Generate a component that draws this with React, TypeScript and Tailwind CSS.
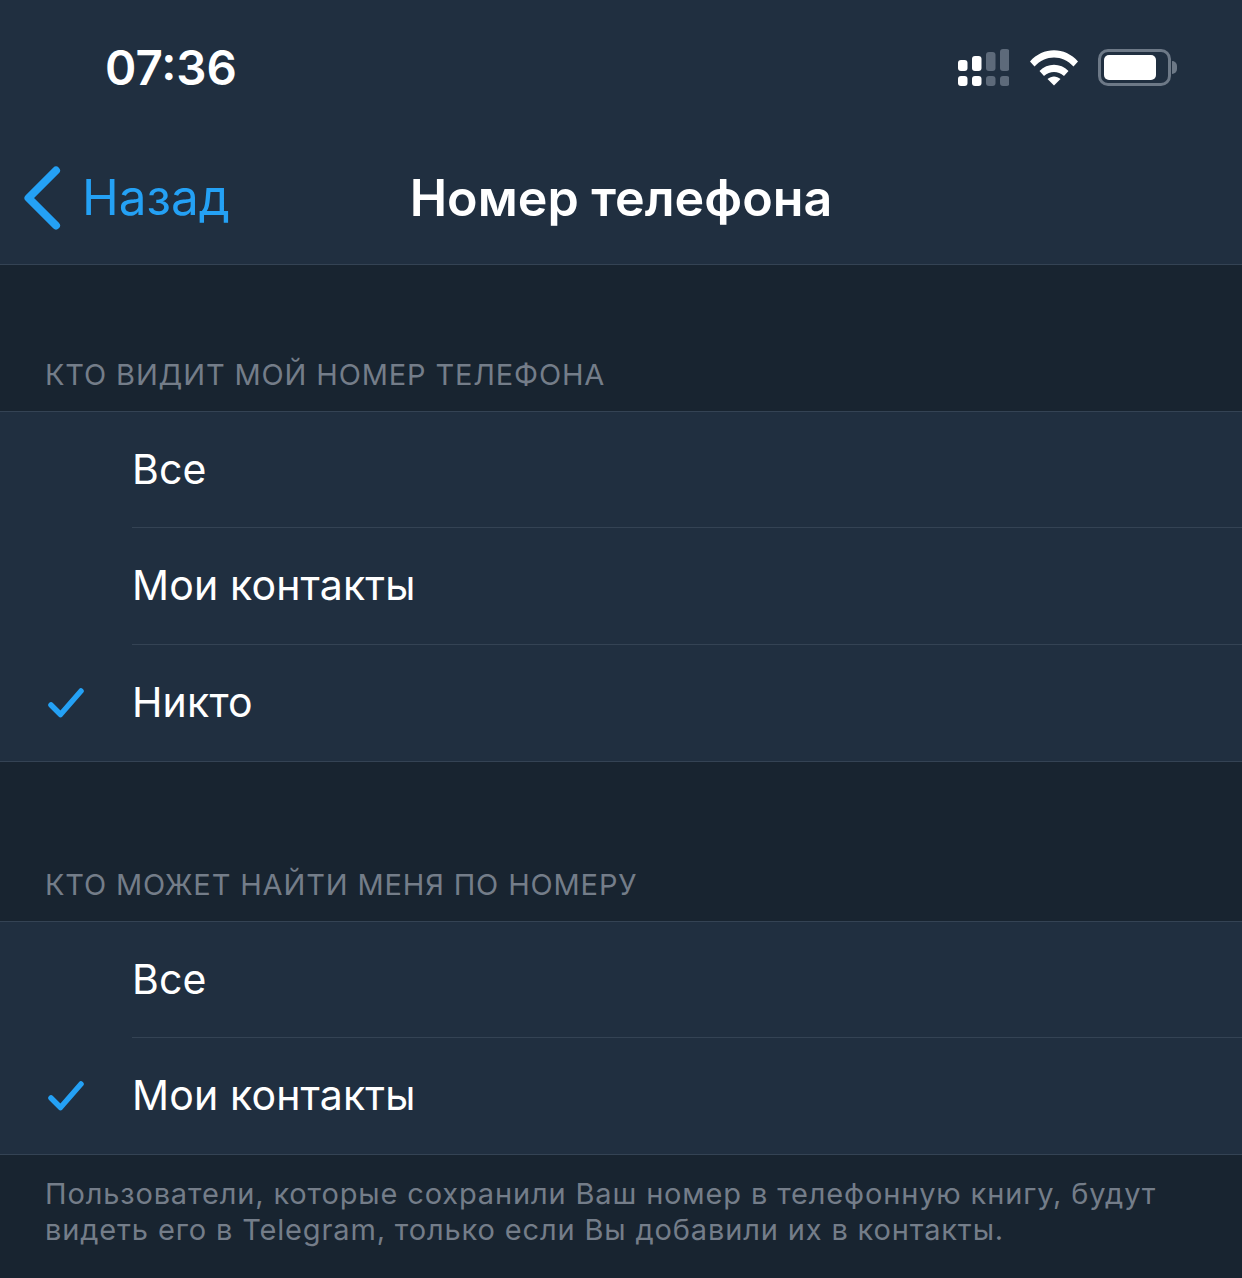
const fontStack = "font-['Inter','Noto_Sans',sans-serif]"

function Check() {
  return (
    <svg width="36" height="30" viewBox="0 0 36 30" fill="none" className="text-[#24a1f5]">
      <path d="M3 17 L12.5 26.5 L33 3" stroke="currentColor" strokeWidth="5.5" strokeLinecap="round" strokeLinejoin="round" />
    </svg>
  )
}

function SignalIcon() {
  const bars = [
    { x: 0, top: 11, full: true },
    { x: 14, top: 7, full: true },
    { x: 28, top: 3, full: false },
    { x: 42, top: 0, full: false },
  ]
  return (
    <svg width="51" height="38" viewBox="0 0 51 38" className="mr-[1px]">
      {bars.map((b) => (
        <g key={b.x} fill={b.full ? '#ffffff' : '#5d6a7a'}>
          <rect x={b.x} y={b.top} width="9.5" height={22 - b.top} rx="3" />
          <rect x={b.x} y="27" width="9.5" height="10" rx="3" />
        </g>
      ))}
    </svg>
  )
}

function WifiIcon() {
  return (
    <svg width="48" height="36" viewBox="0 0 48 36" fill="#ffffff">
      <path d="M0 11.5 C13 -3.5 35 -3.5 48 11.5 L43.5 16.5 C32.5 4.5 15.5 4.5 4.5 16.5 Z" />
      <path d="M9.5 21 C17.5 12.5 30.5 12.5 38.5 21 L34 26 C28 20.5 20 20.5 14 26 Z" />
      <path d="M17.5 29 C21.5 25.5 26.5 25.5 30.5 29 L24 35.5 Z" />
    </svg>
  )
}

function BatteryIcon() {
  return (
    <div className="flex items-center">
      <div className="w-[73px] h-[37px] rounded-[10px] border-[3px] border-[#6d7987] p-[3px]">
        <div className="h-full w-[52px] rounded-[5px] bg-white" />
      </div>
      <div className="ml-[1px] w-[5px] h-[13px] rounded-r-full bg-[#6d7987]" />
    </div>
  )
}

function Row({ label, height, checked, last }: { label: string; height: string; checked?: boolean; last?: boolean }) {
  return (
    <div className={`flex bg-[#202f40] ${height}`}>
      <div className="w-[132px] pl-[48px] flex items-center shrink-0">{checked && <Check />}</div>
      <div className={`flex-1 flex items-center text-[41px] tracking-[0.15px] text-white ${last ? '' : 'border-b border-[#344354]'}`}>
        {label}
      </div>
    </div>
  )
}

function SectionHeader({ title, height }: { title: string; height: string }) {
  return (
    <div className={`pb-[16px] pl-[45px] flex items-end text-[29px] leading-[40px] tracking-[0.85px] text-[#747d89] border-b border-[#344354] ${height}`}>
      {title}
    </div>
  )
}

export default function App() {
  return (
    <div className={`w-[1242px] h-[1278px] overflow-hidden bg-[#182430] ${fontStack}`}>
      <div className="h-[265px] bg-[#202f40] border-b border-[#344354]">
        <div className="h-[133px] pt-[2px] flex items-center justify-between pl-[105px] pr-[65px]">
          <span className="text-[47.5px] font-semibold text-white">07:36</span>
          <div className="flex items-center gap-[20px]">
            <SignalIcon />
            <WifiIcon />
            <BatteryIcon />
          </div>
        </div>
        <div className="relative h-[131px] pb-[2px] flex items-center justify-center">
          <div className="absolute left-[24px] -top-[1px] h-full flex items-center gap-[21px] text-[#24a1f5] text-[49.5px]">
            <svg width="37" height="64" viewBox="0 0 37 64" fill="none">
              <path d="M32 4.5 L4.5 32 L32 59.5" stroke="currentColor" strokeWidth="8" strokeLinecap="round" strokeLinejoin="round" />
            </svg>
            <span>Назад</span>
          </div>
          <span className="text-[50.2px] font-semibold text-white">Номер телефона</span>
        </div>
      </div>

      <SectionHeader title="КТО ВИДИТ МОЙ НОМЕР ТЕЛЕФОНА" height="h-[147px]" />
      <Row label="Все" height="h-[116px]" />
      <Row label="Мои контакты" height="h-[117px]" />
      <Row label="Никто" height="h-[116px]" checked last />
      <div className="border-t border-[#344354]" />

      <SectionHeader title="КТО МОЖЕТ НАЙТИ МЕНЯ ПО НОМЕРУ" height="h-[160px]" />
      <Row label="Все" height="h-[116px]" />
      <Row label="Мои контакты" height="h-[116px]" checked last />
      <div className="border-t border-[#344354]" />

      <p className="pt-[21px] pl-[45px] text-[29px] leading-[36px] tracking-[0.85px] text-[#747d89]">
        Пользователи, которые сохранили Ваш номер в телефонную книгу, будут
        <br />
        видеть его в Telegram, только если Вы добавили их в контакты.
      </p>
    </div>
  )
}
